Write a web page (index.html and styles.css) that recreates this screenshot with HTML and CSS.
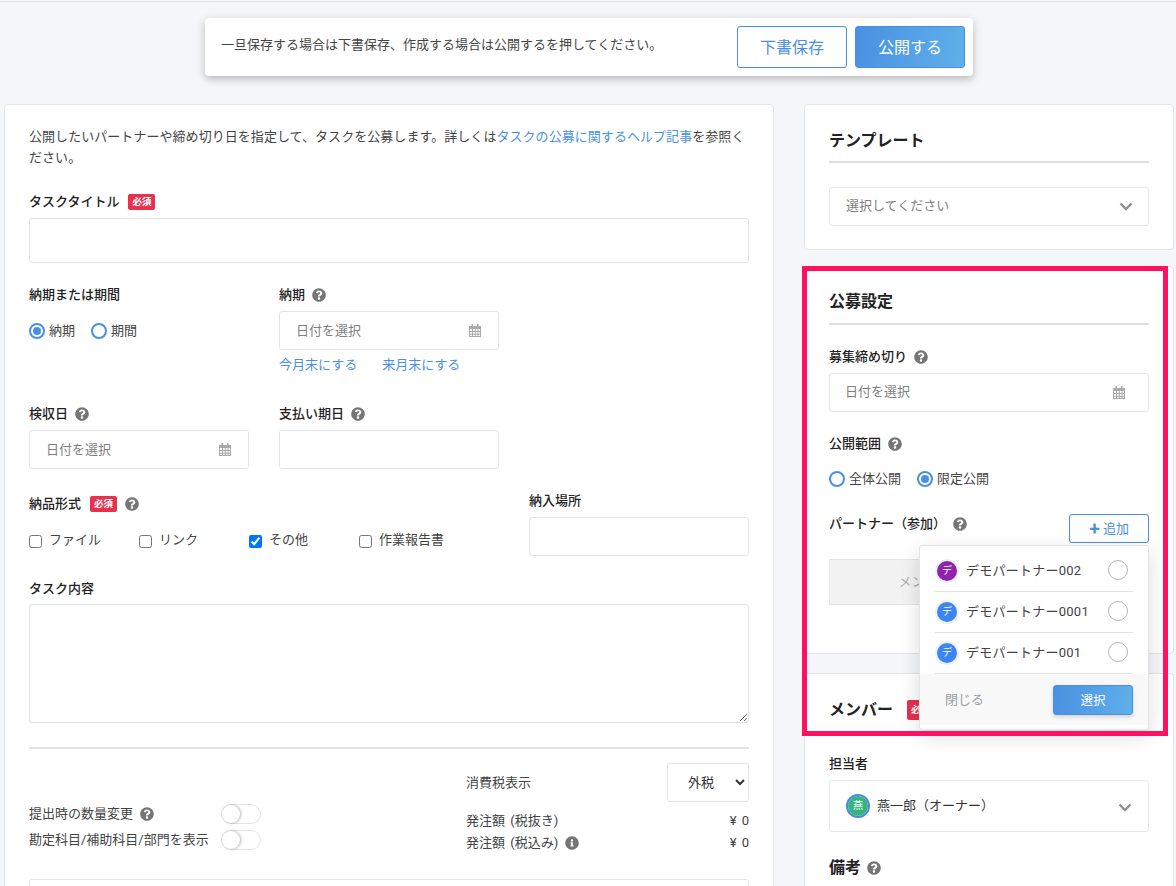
FILE: index.html
```html
<!DOCTYPE html>
<html lang="ja">
<head>
<meta charset="utf-8">
<title>タスク公募</title>
<link rel="stylesheet" href="styles.css">
</head>
<body>
<svg class="defs" width="0" height="0" aria-hidden="true">
  <symbol id="q" viewBox="0 0 512 512"><path d="M504 256c0 136.997-111.043 248-248 248S8 392.997 8 256C8 119.083 119.043 8 256 8s248 111.083 248 248zM262.655 90c-54.497 0-89.255 22.957-116.549 63.758-3.536 5.286-2.353 12.415 2.715 16.258l34.699 26.31c5.205 3.947 12.621 3.008 16.665-2.122 17.864-22.658 30.113-35.797 57.303-35.797 20.429 0 45.698 13.148 45.698 32.958 0 14.976-12.363 22.667-32.534 33.976C247.128 238.528 216 254.941 216 296v4c0 6.627 5.373 12 12 12h56c6.627 0 12-5.373 12-12v-1.333c0-28.462 83.186-29.647 83.186-106.667 0-58.002-60.165-102-116.531-102zM256 338c-25.365 0-46 20.635-46 46 0 25.364 20.635 46 46 46s46-20.636 46-46c0-25.365-20.635-46-46-46z"/></symbol>
  <symbol id="i" viewBox="0 0 512 512"><path d="M256 8C119.043 8 8 119.083 8 256c0 136.997 111.043 248 248 248s248-111.003 248-248C504 119.083 392.957 8 256 8zm0 110c23.196 0 42 18.804 42 42s-18.804 42-42 42-42-18.804-42-42 18.804-42 42-42zm56 254c0 6.627-5.373 12-12 12h-88c-6.627 0-12-5.373-12-12v-24c0-6.627 5.373-12 12-12h12v-64h-12c-6.627 0-12-5.373-12-12v-24c0-6.627 5.373-12 12-12h64c6.627 0 12 5.373 12 12v100h12c6.627 0 12 5.373 12 12v24z"/></symbol>
  <symbol id="cal" viewBox="0 0 12 13"><path d="M2.5 0h1.5v2h4V0h1.500v2H12v11H0V2h2.500zM1 5v2h2V5zm3 0v2h1.800V5zm2.800 0v2H8.500V5zM9.500 5v2H11V5zM1 8v1.800h2V8zm3 0v1.800h1.800V8zm2.800 0v1.800H8.500V8zM9.500 8v1.800H11V8zM1 10.800V12h2v-1.200zm3 0V12h1.800v-1.200zm2.800 0V12H8.500v-1.200zm2.700 0V12H11v-1.200z" fill-rule="evenodd"/></symbol>
  <symbol id="chev" viewBox="0 0 14 9"><path d="M1.500 1.500L7 7l5.500-5.500" fill="none" stroke="currentColor" stroke-width="2.400"/></symbol>
</svg>

<div class="topline"></div>

<div class="savebar-wrap">
  <div class="savebar">
    <p class="savebar-text">一旦保存する場合は下書保存、作成する場合は公開するを押してください。</p>
    <button class="btn-outline-lg">下書保存</button>
    <button class="btn-primary-lg">公開する</button>
  </div>
</div>

<main class="layout">
  <section class="card main-card">
    <p class="intro">公開したいパートナーや締め切り日を指定して、タスクを公募します。詳しくは<a class="link">タスクの公募に関するヘルプ記事</a>を参照ください。</p>

    <div class="label title-label">タスクタイトル<span class="badge">必須</span></div>
    <input class="field field-full" type="text">

    <div class="row row-deadline">
      <div class="col">
        <div class="label">納期または期間</div>
        <div class="radios radios-deadline">
          <span class="radio on"></span><span class="radio-text">納期</span>
          <span class="radio"></span><span class="radio-text">期間</span>
        </div>
      </div>
      <div class="col">
        <div class="label">納期<svg class="help"><use href="#q"/></svg></div>
        <div class="date"><span>日付を選択</span><svg class="cal"><use href="#cal"/></svg></div>
        <div class="quick"><a class="link">今月末にする</a><a class="link">来月末にする</a></div>
      </div>
    </div>

    <div class="row row-dates">
      <div class="col">
        <div class="label">検収日<svg class="help"><use href="#q"/></svg></div>
        <div class="date"><span>日付を選択</span><svg class="cal"><use href="#cal"/></svg></div>
      </div>
      <div class="col">
        <div class="label">支払い期日<svg class="help"><use href="#q"/></svg></div>
        <div class="date"></div>
      </div>
    </div>

    <div class="row row-format">
      <div class="format">
        <div class="label format-label">納品形式<span class="badge">必須</span><svg class="help"><use href="#q"/></svg></div>
        <div class="checks">
          <label class="check"><input type="checkbox">ファイル</label>
          <label class="check"><input type="checkbox">リンク</label>
          <label class="check"><input type="checkbox" checked>その他</label>
          <label class="check"><input type="checkbox">作業報告書</label>
        </div>
      </div>
      <div class="col">
        <div class="label">納入場所</div>
        <div class="date"></div>
      </div>
    </div>

    <div class="label content-label">タスク内容</div>
    <textarea class="textarea"></textarea>

    <hr class="rule">

    <div class="totals">
      <div class="switches">
        <div class="switch-row"><span class="switch-label">提出時の数量変更<svg class="help"><use href="#q"/></svg></span><span class="switch"></span></div>
        <div class="switch-row"><span class="switch-label">勘定科目/補助科目/部門を表示</span><span class="switch"></span></div>
      </div>
      <div class="tax">
        <div class="tax-select-row"><span>消費税表示</span><select class="select-native"><option>外税</option></select></div>
        <div class="amount"><span>発注額 (税抜き)</span><span>¥ 0</span></div>
        <div class="amount"><span>発注額 (税込み)<svg class="help"><use href="#i"/></svg></span><span>¥ 0</span></div>
      </div>
    </div>

    <div class="next-box"></div>
  </section>

  <aside class="side">
    <section class="card side-card template-card">
      <h2 class="side-title">テンプレート</h2>
      <div class="side-select"><span>選択してください</span><svg class="chev"><use href="#chev"/></svg></div>
    </section>

    <section class="card side-card recruit-card">
      <h2 class="side-title small">公募設定</h2>
      <div class="label">募集締め切り<svg class="help"><use href="#q"/></svg></div>
      <div class="date date-wide"><span>日付を選択</span><svg class="cal"><use href="#cal"/></svg></div>
      <div class="label range-label">公開範囲<svg class="help"><use href="#q"/></svg></div>
      <div class="radios radios-range">
        <span class="radio"></span><span class="radio-text">全体公開</span>
        <span class="radio on"></span><span class="radio-text">限定公開</span>
      </div>
      <div class="partner-head">
        <div class="label">パートナー（参加）<svg class="help"><use href="#q"/></svg></div>
        <button class="btn-add"><b>✚</b> 追加</button>
      </div>
      <div class="empty-box">メンバーを選択してください。</div>
    </section>

    <section class="card side-card member-card">
      <h2 class="side-title member-title">メンバー<span class="badge">必須</span></h2>
      <div class="label owner-label">担当者</div>
      <div class="owner-select">
        <span class="avatar-ring"><span class="avatar green">燕</span></span>
        <span class="owner-name">燕一郎（オーナー）</span>
        <svg class="chev"><use href="#chev"/></svg>
      </div>
      <h2 class="side-title note-title">備考<svg class="help"><use href="#q"/></svg></h2>
    </section>
  </aside>
</main>

<div class="popup">
  <ul class="popup-list">
    <li class="popup-item"><span class="avatar purple">デ</span><span class="popup-name">デモパートナー002</span><span class="pick"></span></li>
    <li class="popup-item"><span class="avatar blue">デ</span><span class="popup-name">デモパートナー0001</span><span class="pick"></span></li>
    <li class="popup-item"><span class="avatar blue">デ</span><span class="popup-name">デモパートナー001</span><span class="pick"></span></li>
  </ul>
  <div class="popup-foot"><span class="close">閉じる</span><button class="btn-select">選択</button></div>
</div>

<div class="highlight"></div>
</body>
</html>
```
FILE: styles.css
```css
* { box-sizing: border-box; }
html, body { margin: 0; padding: 0; }
body {
  position: relative;
  height: 886px;
  overflow: hidden;
  background: #f5f6fa;
  color: #333;
  font-family: Roboto, "Noto Sans CJK JP", sans-serif;
  font-size: 13px;
  line-height: 20px;
}
.defs { position: absolute; }
.topline { height: 1px; margin-top: 1px; background: #e4e6e8; }

.savebar-wrap { display: flex; justify-content: center; padding: 16px 0 0 2px; }
.savebar {
  display: flex;
  align-items: center;
  width: 768px;
  height: 58px;
  padding: 0 8px 0 16px;
  background: #fff;
  border-radius: 4px;
  box-shadow: 0 3px 8px rgba(0, 0, 0, .25);
}
.savebar-text { margin: 0 auto 4px 0; font-size: 13px; color: #444; }
button { font-family: inherit; cursor: pointer; }
.btn-outline-lg, .btn-primary-lg {
  width: 110px;
  height: 42px;
  padding: 0 0 2px;
  border-radius: 3px;
  font-size: 16px;
}
.btn-outline-lg { background: #fff; border: 1px solid #4a90e2; color: #4a90e2; }
.btn-primary-lg {
  margin-left: 8px;
  background: linear-gradient(100deg, #4a90e2, #5fb0ea);
  border: 1px solid #4a90e2;
  color: #fff;
}

.layout { display: flex; align-items: flex-start; gap: 30px; padding: 28px 2px 0 4px; }
.card { background: #fff; border: 1px solid #e2e4e6; border-radius: 4px; }
.link { color: #4a90e2; }

.main-card { width: 770px; height: 900px; flex: none; padding: 21px 24px 0; }
.intro { margin: 0; line-height: 21px; font-size: 13px; color: #444; letter-spacing: .05px; }
.label { display: flex; align-items: center; height: 20px; font-size: 13px; font-weight: 500; color: #222; }
.title-label { margin-top: 24px; }
.badge {
  display: inline-block;
  width: 27px;
  height: 16px;
  margin-left: 9px;
  background: #e8304f;
  border-radius: 2px;
  color: #fff;
  font-size: 9.500px;
  font-weight: 700;
  line-height: 16px;
  text-align: center;
}
.help { width: 14px; height: 14px; margin-left: 7px; fill: #757575; flex: none; }
.field { display: block; font: inherit; }
.field-full { width: 720px; height: 45px; margin-top: 6px; border: 1px solid #dde5e5; border-radius: 3px; }

.row { display: flex; gap: 30px; }
.col { width: 220px; }
.row-deadline { margin-top: 22px; height: 119px; }
.row-dates { height: 87px; }
.row-format { height: 88px; }

.date {
  display: flex;
  align-items: center;
  justify-content: space-between;
  width: 220px;
  height: 39px;
  margin-top: 6px;
  padding: 0 17px 0 16px;
  background: #fff;
  border: 1px solid #dfe5e8;
  border-radius: 3px;
  color: #808080;
  font-size: 13px;
}
.date-wide { width: 320px; padding: 0 23px 1px 15px; }
.cal { width: 12px; height: 13px; fill: #a9a9a9; }
.quick { display: flex; gap: 25px; margin-top: 5px; }

.radios { display: flex; align-items: center; font-size: 13px; color: #444; }
.radios-deadline { margin-top: 16px; }
.radio {
  position: relative;
  width: 16px;
  height: 16px;
  flex: none;
  border: 2px solid #4a90e2;
  border-radius: 50%;
  background: #fff;
}
.radio.on::after {
  content: "";
  position: absolute;
  inset: 2px;
  border-radius: 50%;
  background: #4a90e2;
}
.radio-text { margin: 0 16px 0 4px; }

.format { width: 470px; }
.format-label { margin-top: 3px; }
.format-label .help { margin-left: 8px; }
.checks { display: flex; margin-top: 16px; }
.check { display: flex; align-items: center; width: 110px; font-size: 13px; color: #444; }
.check input { width: 13px; height: 13px; margin: 2px 7px 0 0; accent-color: #0075ff; }

.textarea {
  display: block;
  width: 720px;
  height: 119px;
  margin-top: 5px;
  border: 1px solid #dde5e5;
  border-radius: 3px;
}
.rule { height: 2px; margin: 24px 0 0; border: 0; background: #dfe3e6; }

.totals { display: flex; justify-content: space-between; height: 130px; }
.switches { width: 232px; padding-top: 52px; }
.switch-row { display: flex; align-items: center; justify-content: space-between; height: 26px; font-size: 13px; color: #444; }
.switch-label { display: flex; align-items: center; white-space: nowrap; }
.switch {
  position: relative;
  width: 40px;
  height: 20px;
  flex: none;
  border: 1px solid #e3e3e3;
  border-radius: 10px;
  background: #fff;
}
.switch::before {
  content: "";
  position: absolute;
  left: 0;
  top: 0;
  width: 18px;
  height: 18px;
  border-radius: 50%;
  background: #fff;
  box-shadow: 1px 0 3px rgba(0, 0, 0, .3);
}
.tax { width: 283px; padding-top: 14px; font-size: 13px; color: #444; word-spacing: 2px; }
.tax-select-row { display: flex; align-items: center; justify-content: space-between; height: 39px; }
.select-native {
  width: 82px;
  height: 39px;
  padding-left: 16px;
  background: #fff;
  border: 1px solid #dfe5e8;
  border-radius: 3px;
  color: #333;
  font: inherit;
}
.amount { display: flex; align-items: center; justify-content: space-between; height: 20px; }
.tax-select-row + .amount { margin-top: 9px; }
.amount + .amount { margin-top: 2px; }
.amount > span:first-child { display: flex; align-items: center; }
.next-box { height: 40px; border: 1px solid #e2e4e6; border-radius: 3px; }

.side { display: flex; flex-direction: column; gap: 16px; width: 370px; flex: none; }
.side-card { padding: 0 24px; }
.template-card { height: 146px; padding-top: 24px; }
.recruit-card { height: 388px; padding-top: 24px; }
.member-card { height: 300px; margin-top: 3px; padding-top: 24px; }
.side-title {
  margin: 0;
  height: 34px;
  font-size: 16px;
  font-weight: 700;
  line-height: 24px;
  color: #222;
  border-bottom: 2px solid #dedede;
}
.side-title.small { line-height: 22px; margin-bottom: 22px; }
.side-select, .owner-select {
  display: flex;
  align-items: center;
  justify-content: space-between;
  width: 320px;
  background: #fff;
  border: 1px solid #e6e8ea;
  border-radius: 3px;
}
.side-select { height: 39px; margin-top: 24px; padding: 0 15px 1px 16px; color: #808080; font-size: 13px; }
.chev { width: 14px; height: 9px; color: #8f8f8f; flex: none; }
.range-label { margin-top: 22px; }
.radios-range { margin-top: 15px; }
.partner-head { display: flex; align-items: flex-start; justify-content: space-between; margin-top: 25px; }
.btn-add {
  width: 80px;
  height: 29px;
  padding: 0 0 3px;
  background: #fff;
  border: 1px solid #4a90e2;
  border-radius: 3px;
  color: #4a90e2;
  font-size: 13px;
}
.btn-add b { font-size: 11px; }
.empty-box {
  height: 46px;
  margin-top: 16px;
  background: #f2f2f2;
  border: 1px solid #e2e6e8;
  color: #aaa;
  font-size: 13px;
  line-height: 44px;
  text-align: center;
}
.member-title { display: flex; align-items: center; height: auto; border: 0; }
.member-title .badge { width: 27px; height: 20px; line-height: 20px; margin-left: 14px; }
.owner-label { margin-top: 32px; }
.owner-select { height: 52px; margin-top: 6px; padding: 0 16px; }
.owner-select .chev { margin-top: 3px; }
.owner-name { flex: 1; margin-left: 7px; color: #333; font-size: 13px; }
.avatar-ring {
  display: flex;
  align-items: center;
  justify-content: center;
  width: 24px;
  height: 24px;
  border: 2px solid #4a86e8;
  border-radius: 50%;
}
.avatar {
  display: flex;
  align-items: center;
  justify-content: center;
  width: 20px;
  height: 20px;
  flex: none;
  border-radius: 50%;
  color: #fff;
  font-size: 10px;
  line-height: 1;
}
.green { background: #36b37e; }
.purple { background: #8e24aa; box-shadow: 0 0 0 2px #eef0f4; }
.blue { background: #3d85f0; box-shadow: 0 0 0 2px #eef0f4; }
.note-title { display: flex; align-items: center; height: auto; margin-top: 24px; border: 0; }
.note-title .help { margin-left: 6px; }

.popup {
  position: absolute;
  left: 919px;
  top: 545px;
  width: 230px;
  height: 185px;
  background: #fff;
  border: 1px solid #e2e4e6;
  border-radius: 3px;
  box-shadow: 0 6px 20px rgba(0, 0, 0, .14);
}
.popup-list { margin: 0; padding: 5px 15px 0; list-style: none; }
.popup-item {
  display: flex;
  align-items: center;
  height: 41px;
  padding-left: 2px;
  border-bottom: 1px solid #e0e2e4;
}
.popup-name { flex: 1; margin-left: 9px; color: #444; font-size: 13px; letter-spacing: .25px; }
.pick { width: 20px; height: 20px; margin: -2px 5px 0 0; border: 1px solid #b5b5b5; border-radius: 50%; background: #fff; }
.popup-foot {
  display: flex;
  align-items: center;
  justify-content: space-between;
  height: 51px;
  padding: 0 15px 0 25px;
  background: #f8f8f8;
}
.close { color: #9aa0a6; font-size: 13px; }
.btn-select {
  width: 80px;
  height: 30px;
  padding: 0;
  background: linear-gradient(100deg, #4a90e2, #5fb0ea);
  border: 1px solid #4a90e2;
  border-radius: 3px;
  box-shadow: 0 2px 4px rgba(0, 0, 0, .15);
  color: #fff;
  font-size: 12.5px;
}
.highlight {
  position: absolute;
  left: 802px;
  top: 266px;
  width: 366px;
  height: 470px;
  border: 5px solid #ff1060;
  pointer-events: none;
}
```
